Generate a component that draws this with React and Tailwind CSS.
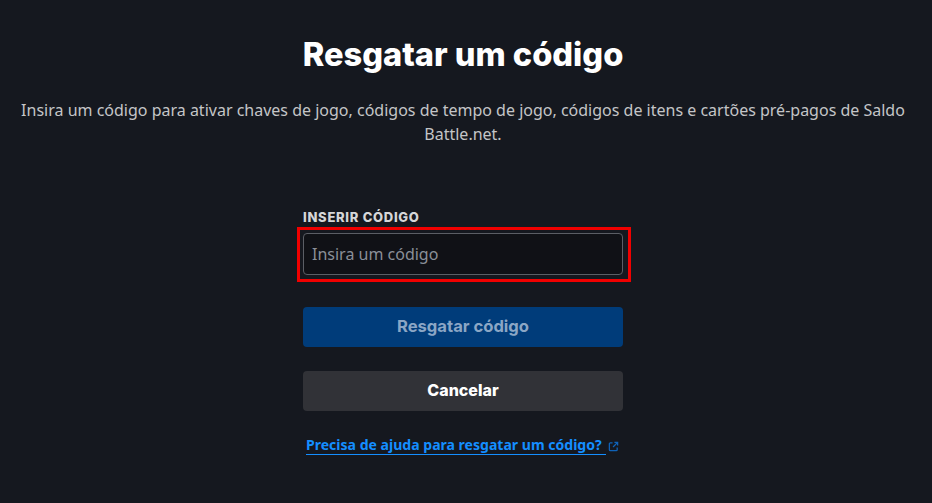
const NOTO = { fontFamily: '"Noto Sans", sans-serif' }

function ExternalIcon() {
  return (
    <svg width="11" height="11" viewBox="0 0 12 12" fill="none" stroke="#0f62b8" strokeWidth="1.4" className="ml-0.5 mt-px shrink-0">
      <path d="M5 2H2.5A1 1 0 0 0 1.5 3v6.5a1 1 0 0 0 1 1H9a1 1 0 0 0 1-1V7" />
      <path d="M7 1.5h3.5V5M10.5 1.5 5.5 6.5" />
    </svg>
  )
}

export default function App() {
  return (
    <div className="h-[503px] w-[932px] overflow-hidden bg-[#15181f] font-['Inter',sans-serif]">
      <div className="flex w-[926px] flex-col items-center pt-[33px]">
        <h1 className="text-[32.6px] font-extrabold leading-[42px] text-white">Resgatar um código</h1>
        <p className="mt-[23px] w-[900px] text-center font-['Noto_Sans',sans-serif] text-base leading-6 text-[#c4c5c7]">
          Insira um código para ativar chaves de jogo, códigos de tempo de jogo, códigos de itens e cartões pré-pagos de Saldo Battle.net.
        </p>

        <form className="mt-[63px] flex w-[320px] flex-col">
          <label className="text-[13px] font-extrabold leading-[16px] tracking-[0.055em] text-[#d5d6d8]">INSERIR CÓDIGO</label>
          <div className="relative mt-[8px]">
            <input
              placeholder="Insira um código"
              style={NOTO}
              className="h-[42px] w-full rounded border border-[#5b5e65] bg-[#101116] px-2 text-base text-white outline-none placeholder:text-[#8a8f98]"
            />
            <div className="pointer-events-none absolute -bottom-[7px] -left-[6px] -right-2 -top-[6px] border-[3px] border-[#f00000]" />
          </div>
          <button type="button" className="mt-[32px] h-10 rounded bg-[#003c7a] pb-0.5 text-[16.6px] font-bold text-[#8ba6c5]">
            Resgatar código
          </button>
          <button type="button" className="mt-6 h-10 rounded bg-[#313237] pb-0.5 text-base font-extrabold text-white">
            Cancelar
          </button>
          <div className="mt-[25px] flex items-center pl-[3px]">
            <a href="#" style={NOTO} className="border-b border-[#148eff] pr-1 text-[14.05px] font-bold leading-[18px] text-[#148eff]">
              Precisa de ajuda para resgatar um código?
            </a>
            <ExternalIcon />
          </div>
        </form>
      </div>
    </div>
  )
}
